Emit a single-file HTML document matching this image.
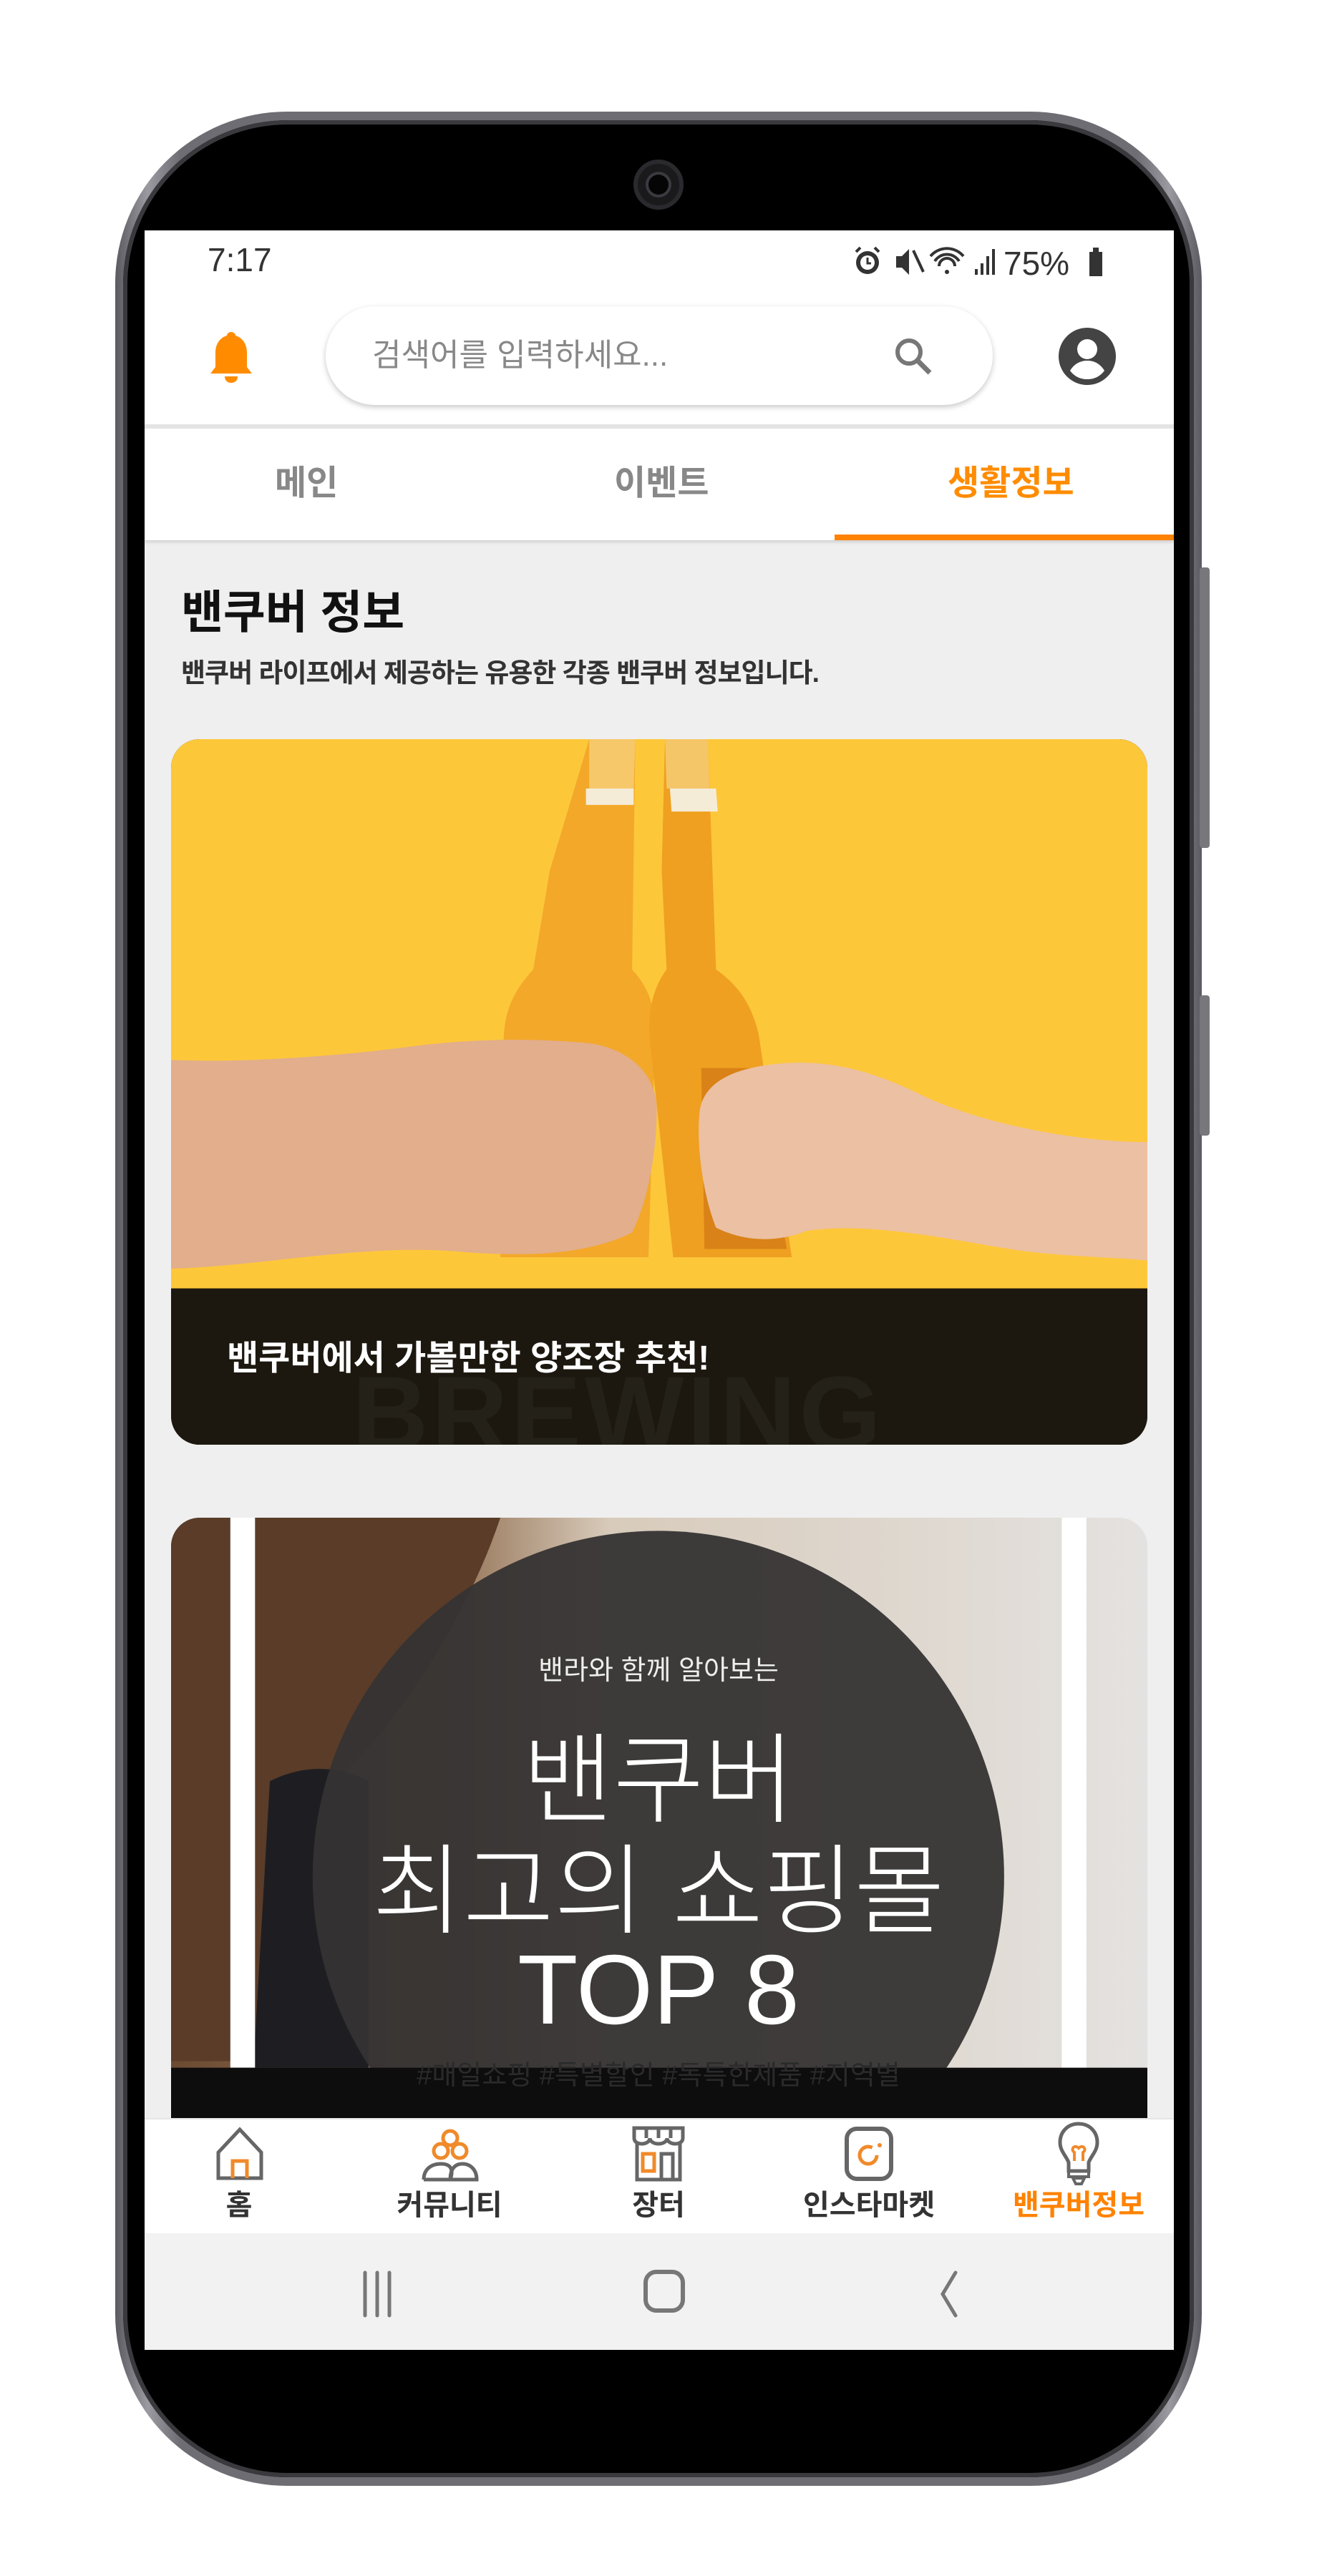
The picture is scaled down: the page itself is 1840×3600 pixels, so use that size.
<!DOCTYPE html>
<html><head><meta charset="utf-8">
<style>
*{margin:0;padding:0;box-sizing:border-box}
body{width:1840px;height:3600px;background:#fff;position:relative;overflow:hidden;font-family:"Liberation Sans","Noto Sans CJK KR",sans-serif}
.a{position:absolute}
.t{position:absolute;white-space:nowrap;line-height:1}
</style></head><body>
<div class="a" style="left:161px;top:156px;width:1518px;height:3318px;border-radius:240px;background:linear-gradient(90deg,#5a5a60,#9a9aa0 3%,#6d6d73 6%,#6d6d73 94%,#9a9aa0 97%,#5a5a60)"></div>
<div class="a" style="left:172px;top:168px;width:1496px;height:3294px;border-radius:230px;background:#000;box-shadow:inset 0 0 0 6px #3a3a3e"></div>
<div class="a" style="left:1676px;top:793px;width:14px;height:392px;border-radius:4px;background:#77777c"></div>
<div class="a" style="left:1676px;top:1391px;width:14px;height:196px;border-radius:4px;background:#77777c"></div>
<div class="a" style="left:885px;top:223px;width:70px;height:70px;border-radius:50%;background:#1a1a1c;border:6px solid #2a2a2e"></div>
<div class="a" style="left:906px;top:244px;width:28px;height:28px;border-radius:50%;background:#050505;box-shadow:0 0 0 4px #3a3a40"></div>
<div class="a" style="left:202px;top:322px;width:1438px;height:2962px;background:#efefef;overflow:hidden"></div>
<div class="a" style="left:202px;top:322px;width:1438px;height:271px;background:#fff"></div>
<div class="t" style="left:290px;top:340px;font-size:46px;color:#333">7:17</div>
<svg class="a" style="left:1170px;top:340px" width="380" height="50" viewBox="-20 0 380 50">
<circle cx="22" cy="27" r="16" fill="#333"/><circle cx="22" cy="27" r="10" fill="#fff"/><path d="M22 20v8h5" stroke="#333" stroke-width="3" fill="none"/><path d="M6 12l6-6M38 12l-6-6" stroke="#333" stroke-width="4"/>
<path d="M62 18h8l10-10v36l-10-10h-8z" fill="#333"/><path d="M86 10l14 30" stroke="#333" stroke-width="4"/>
<path d="M110 18a30 30 0 0 1 46 0M116 25a20 20 0 0 1 34 0M122 32a10 10 0 0 1 22 0" stroke="#333" stroke-width="4" fill="none"/><circle cx="133" cy="40" r="3" fill="#333"/>
<rect x="172" y="36" width="4" height="8" fill="#333"/><rect x="180" y="28" width="4" height="16" fill="#333"/><rect x="188" y="18" width="4" height="26" fill="#333"/><rect x="196" y="8" width="4" height="36" fill="#333"/>
<text x="212" y="44" font-size="46" fill="#333" font-family="Liberation Sans">75%</text>
<rect x="332" y="12" width="18" height="34" fill="#333"/><rect x="337" y="6" width="8" height="6" fill="#333"/>
</svg>
<svg class="a" style="left:292px;top:460px" width="62" height="80" viewBox="0 0 62 80">
<path d="M31 4c-4 0-6 3-6 5-10 3-16 12-16 24v20l-7 9h58l-7-9V33c0-12-6-21-16-24 0-2-2-5-6-5z" fill="#ff8c00"/><path d="M22 66h18c0 6-4 9-9 9s-9-3-9-9z" fill="#ff8c00"/>
</svg>
<div class="a" style="left:455px;top:428px;width:932px;height:138px;border-radius:69px;background:#fff;box-shadow:0 3px 8px rgba(0,0,0,.22)"></div>
<div class="t" style="left:520px;top:475px;font-size:44px;color:#888">검색어를 입력하세요...</div>
<svg class="a" style="left:1248px;top:470px" width="56" height="56" viewBox="0 0 56 56"><circle cx="22" cy="22" r="16" stroke="#777" stroke-width="6" fill="none"/><path d="M33 33l18 18" stroke="#777" stroke-width="7"/></svg>
<svg class="a" style="left:1477px;top:456px" width="84" height="84" viewBox="0 0 84 84"><circle cx="42" cy="42" r="40" fill="#444"/><circle cx="42" cy="32" r="14" fill="#fff"/><path d="M18 62c6-10 15-14 24-14s18 4 24 14c-6 8-14 12-24 12s-18-4-24-12z" fill="#fff"/></svg>
<div class="a" style="left:202px;top:593px;width:1438px;height:162px;background:#fff;border-top:6px solid #e4e4e4;box-shadow:0 3px 4px rgba(0,0,0,.12)"></div>
<div class="t" style="left:384px;top:652px;font-size:48px;color:#888;font-weight:bold">메인</div>
<div class="t" style="left:858px;top:652px;font-size:48px;color:#888;font-weight:bold">이벤트</div>
<div class="t" style="left:1324px;top:652px;font-size:48px;color:#ff8c00;font-weight:bold">생활정보</div>
<div class="a" style="left:1166px;top:747px;width:474px;height:8px;background:#ff8200"></div>
<div class="t" style="left:253px;top:824px;font-size:64px;color:#111;font-weight:bold">밴쿠버 정보</div>
<div class="t" style="left:253px;top:922px;font-size:37px;color:#333;font-weight:bold;letter-spacing:-1px">밴쿠버 라이프에서 제공하는 유용한 각종 밴쿠버 정보입니다.</div>
<div class="a" style="left:239px;top:1033px;width:1364px;height:986px;border-radius:40px;overflow:hidden;background:#1a1610">
<svg width="1364" height="986" viewBox="0 0 593 429" preserveAspectRatio="none" style="display:block">
<rect width="593" height="334" fill="#fdc73a"/>
<path d="M254 0h28l-2 140c9 10 14 20 14 40l-4 135h-90l2-130c0-22 8-34 18-45l10-60z" fill="#f3a82a"/>
<path d="M252 30h29v10h-29z" fill="#f5ecd8"/>
<path d="M254 0h28l-1 30h-27z" fill="#f6d07a" opacity=".8"/>
<path d="M300 0h26l5 140c14 10 22 22 26 40l20 135h-72l-14-130c-2-20 2-34 10-45l-3-60z" fill="#efa020"/>
<path d="M303 30h28l1 14h-28z" fill="#f5ecd8"/>
<path d="M300 0h26l1 30h-26z" fill="#f6d07a" opacity=".8"/>
<path d="M322 200h32l20 110h-50z" fill="#c66a10" opacity=".55"/>
<path d="M0 195c40 2 100-2 145-8 30-4 70-6 110-2 25 4 40 20 40 40 0 25-5 55-15 75-30 15-70 14-100 12-60-6-120 8-180 10z" fill="#e2ae8c"/>
<path d="M593 245c-40 0-100-10-140-30-25-12-50-20-80-18-28 2-50 10-52 30-2 20 2 50 10 70 20 10 40 8 55 2 40-6 90 6 130 12 30 4 60 4 77 6z" fill="#ecc0a2"/>
<rect y="334" width="593" height="95" fill="#1c1810"/>
<text x="110" y="432" font-size="64" font-weight="bold" fill="#242119" font-family="Liberation Sans" letter-spacing="2">BREWING</text>
</svg>
</div>
<div class="t" style="left:317px;top:1875px;font-size:48px;color:#fff;font-weight:bold">밴쿠버에서 가볼만한 양조장 추천!</div>
<div class="a" style="left:239px;top:2121px;width:1364px;height:900px;border-radius:40px;overflow:hidden">
<svg width="1364" height="840" viewBox="0 0 593 365" preserveAspectRatio="none" style="display:block">
<defs><linearGradient id="g" x1="0" x2="1"><stop offset="0" stop-color="#6b4a32"/><stop offset=".3" stop-color="#9a7a5e"/><stop offset=".45" stop-color="#d8cbbb"/><stop offset="1" stop-color="#e4e2e0"/></linearGradient></defs>
<rect width="593" height="365" fill="url(#g)"/>
<path d="M0 0h200c-20 60-60 120-90 150-40 40-50 120-60 180H0z" fill="#5a3c28"/>
<path d="M60 160c20-10 40-10 60 0v174H50z" fill="#1e1e22"/>
<rect x="36" width="15" height="334" fill="#fff"/>
<rect x="541" width="15" height="334" fill="#fff"/>
<circle cx="296" cy="218" r="210" fill="#353333" opacity=".95"/>
<rect y="334" width="593" height="31" fill="#0d0d0d"/>
</svg>
</div>
<div class="t" style="left:920px;top:2316px;transform:translateX(-50%);font-size:38px;color:#eee">밴라와 함께 알아보는</div>
<div class="t" style="left:920px;top:2420px;transform:translateX(-50%);font-size:138px;color:#fff;font-weight:300">밴쿠버</div>
<div class="t" style="left:920px;top:2575px;transform:translateX(-50%);font-size:138px;color:#fff;font-weight:300">최고의 쇼핑몰</div>
<div class="t" style="left:920px;top:2712px;transform:translateX(-50%);font-size:138px;color:#fff;font-weight:300">TOP 8</div>
<div class="t" style="left:920px;top:2882px;transform:translateX(-50%);font-size:38px;color:#2a2a2a">#매일쇼핑 #특별할인 #독특한제품 #지역별</div>
<div class="a" style="left:202px;top:2960px;width:1438px;height:161px;background:#fff;border-top:2px solid #e6e6e6"></div>
<svg class="a" style="left:297px;top:2970px" width="76" height="80" viewBox="0 0 76 80"><path d="M8 74V38L38 6l30 32v36z" fill="none" stroke="#666" stroke-width="5"/><path d="M28 74V50h20v24" fill="none" stroke="#f08a2a" stroke-width="5"/></svg>
<svg class="a" style="left:586px;top:2970px" width="86" height="80" viewBox="0 0 86 80"><circle cx="43" cy="18" r="10" fill="none" stroke="#f08a2a" stroke-width="5"/><circle cx="30" cy="36" r="10" fill="none" stroke="#f08a2a" stroke-width="5"/><circle cx="56" cy="36" r="10" fill="none" stroke="#f08a2a" stroke-width="5"/><path d="M6 76c0-14 10-22 24-22s18 8 13 22M43 76c0-14 6-22 17-22s20 8 20 22zM6 76h74" fill="none" stroke="#666" stroke-width="5"/></svg>
<svg class="a" style="left:882px;top:2968px" width="76" height="84" viewBox="0 0 76 84"><path d="M4 6h68v14c0 6-6 8-11 8s-11-3-11-8c0 5-6 8-12 8s-12-3-12-8c0 5-6 8-11 8S4 26 4 20z" fill="none" stroke="#666" stroke-width="5"/><path d="M21 6v14M38 6v14M55 6v14M8 28v50h60V28" fill="none" stroke="#666" stroke-width="5"/><rect x="16" y="42" width="16" height="24" fill="none" stroke="#f08a2a" stroke-width="5"/><path d="M42 78V42h16v36" fill="none" stroke="#666" stroke-width="5"/></svg>
<svg class="a" style="left:1178px;top:2970px" width="72" height="80" viewBox="0 0 72 80"><rect x="5" y="5" width="62" height="70" rx="14" fill="none" stroke="#666" stroke-width="6"/><circle cx="35" cy="42" r="12" fill="none" stroke="#f08a2a" stroke-width="5" stroke-dasharray="62 14"/><circle cx="51" cy="28" r="3" fill="#f08a2a"/></svg>
<svg class="a" style="left:1475px;top:2964px" width="64" height="92" viewBox="0 0 64 92"><path d="M32 4C16 4 6 16 6 30c0 12 8 18 12 28v12h28V58c4-10 12-16 12-28C58 16 48 4 32 4z" fill="none" stroke="#666" stroke-width="5"/><path d="M18 70h28v8H18zM24 80h16l-4 8h-8z" fill="none" stroke="#666" stroke-width="4"/><path d="M26 56V44c-6-4 0-12 6-6 6-6 12 2 6 6v12" fill="none" stroke="#f08a2a" stroke-width="4"/></svg>
<div class="t" style="left:334px;top:3062px;transform:translateX(-50%);font-size:40px;color:#333;font-weight:bold">홈</div>
<div class="t" style="left:628px;top:3062px;transform:translateX(-50%);font-size:40px;color:#333;font-weight:bold">커뮤니티</div>
<div class="t" style="left:920px;top:3062px;transform:translateX(-50%);font-size:40px;color:#333;font-weight:bold">장터</div>
<div class="t" style="left:1214px;top:3062px;transform:translateX(-50%);font-size:40px;color:#333;font-weight:bold">인스타마켓</div>
<div class="t" style="left:1507px;top:3062px;transform:translateX(-50%);font-size:40px;color:#ff8200;font-weight:bold">밴쿠버정보</div>
<div class="a" style="left:202px;top:3121px;width:1438px;height:163px;background:#f2f2f2"></div>
<svg class="a" style="left:500px;top:3170px" width="60" height="70"><path d="M10 6v60M27 6v60M44 6v60" stroke="#777" stroke-width="5" stroke-linecap="round"/></svg>
<div class="a" style="left:899px;top:3172px;width:58px;height:60px;border:6px solid #777;border-radius:18px"></div>
<svg class="a" style="left:1305px;top:3170px" width="40" height="70"><path d="M30 6L12 36l18 30" stroke="#777" stroke-width="5" fill="none" stroke-linecap="round"/></svg>
</body></html>
